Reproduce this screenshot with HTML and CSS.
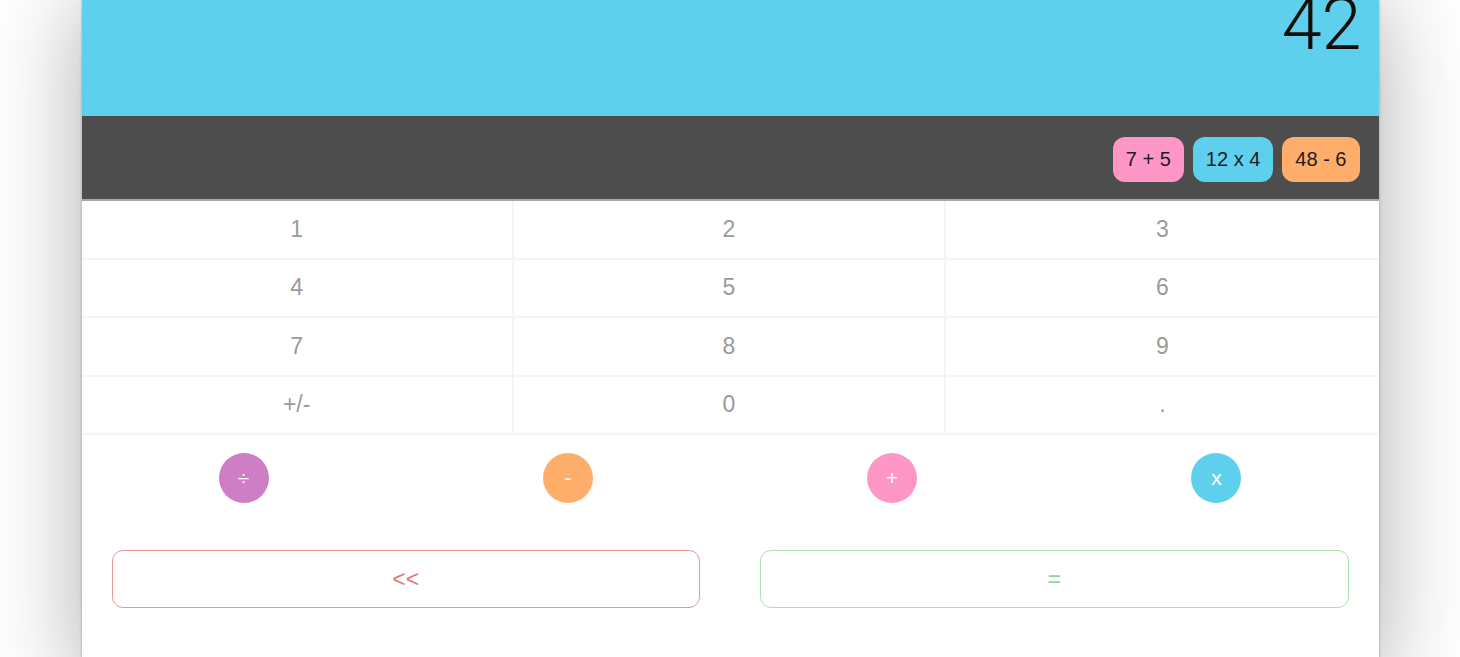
FILE: index.html
```html
<!DOCTYPE html>
<html lang="en">
<head>
<meta charset="utf-8">
<title>Calculator</title>
<link rel="stylesheet" href="styles.css">
</head>
<body>
<div class="calc">
  <div class="display"><span class="display-value">42</span></div>
  <div class="history">
    <span class="chip chip-pink">7 + 5</span>
    <span class="chip chip-blue">12 x 4</span>
    <span class="chip chip-orange">48 - 6</span>
  </div>
  <div class="keypad">
    <div class="key">1</div><div class="key">2</div><div class="key">3</div>
    <div class="key">4</div><div class="key">5</div><div class="key">6</div>
    <div class="key">7</div><div class="key">8</div><div class="key">9</div>
    <div class="key">+/-</div><div class="key">0</div><div class="key">.</div>
  </div>
  <div class="operators">
    <div class="op-cell"><span class="op op-purple">÷</span></div>
    <div class="op-cell"><span class="op op-orange">-</span></div>
    <div class="op-cell"><span class="op op-pink">+</span></div>
    <div class="op-cell"><span class="op op-blue">x</span></div>
  </div>
  <div class="actions">
    <div class="action action-back">&lt;&lt;</div>
    <div class="action action-eq">=</div>
  </div>
</div>
</body>
</html>
```

FILE: styles.css
```css
html, body {
  margin: 0;
  padding: 0;
  background: #ffffff;
  font-family: "Liberation Sans", Arial, Helvetica, sans-serif;
}

.calc {
  width: 1297px;
  margin: 0 auto;
  background: #ffffff;
  box-shadow: 0 0 90px rgba(0, 0, 0, 0.32), 0 0 3px rgba(0, 0, 0, 0.25);
  padding-bottom: 80px;
}

.display {
  height: 116px;
  background: #5fcfee;
  color: #150d08;
  font-family: Roboto, "Liberation Sans", sans-serif;
  font-weight: 300;
  font-size: 72px;
  line-height: 50px;
  text-align: right;
  padding-right: 17px;
  box-sizing: border-box;
}

.history {
  height: 85px;
  background: #4d4d4d;
  border-bottom: 2px solid #a8a8a8;
  box-sizing: border-box;
  display: flex;
  justify-content: flex-end;
  align-items: center;
  gap: 9px;
  padding: 4px 19px 0 0;
}

.chip {
  height: 45px;
  display: flex;
  align-items: center;
  padding: 0 13px;
  border-radius: 12px;
  font-size: 20px;
  color: #1c1c1c;
}

.chip-pink { background: #ff96c8; }
.chip-blue { background: #5fcfee; }
.chip-orange { background: #ffad6b; }

.keypad {
  display: grid;
  grid-template-columns: repeat(3, 1fr);
}

.key {
  height: 58.5px;
  box-sizing: border-box;
  border-bottom: 2px solid #f5f5f5;
  border-right: 2px solid #f5f5f5;
  display: flex;
  align-items: center;
  justify-content: center;
  font-size: 23px;
  color: #9a9a9a;
}

.key:nth-child(3n) {
  border-right: none;
}

.operators {
  display: grid;
  grid-template-columns: repeat(4, 1fr);
  padding-top: 18px;
}

.op-cell {
  display: flex;
  justify-content: center;
}

.op {
  width: 50px;
  height: 50px;
  border-radius: 50%;
  display: flex;
  align-items: center;
  justify-content: center;
  color: #ffffff;
  font-size: 21px;
}

.op-purple { background: #cd7ec5; }
.op-orange { background: #ffad6b; }
.op-pink { background: #ff96c8; }
.op-blue { background: #5fcfee; }

.actions {
  display: grid;
  grid-template-columns: 1fr 1fr;
  gap: 60px;
  padding: 47px 30px 0;
}

.action {
  height: 58px;
  box-sizing: border-box;
  border-radius: 11px;
  display: flex;
  align-items: center;
  justify-content: center;
  font-size: 23px;
  background: #ffffff;
}

.action-back {
  border: 1.5px solid #e8959d;
  color: #e07a82;
}

.action-eq {
  border: 1.5px solid #a9e2b3;
  color: #8fd69c;
}
```
